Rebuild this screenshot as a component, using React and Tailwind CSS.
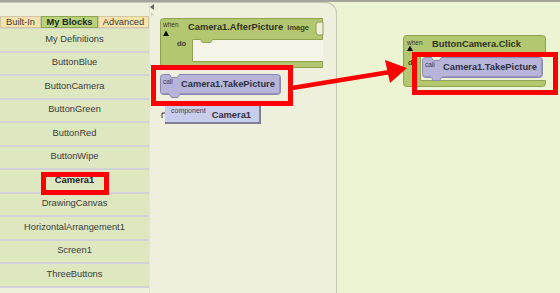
import React from "react";

const drawers = [
  "My Definitions",
  "ButtonBlue",
  "ButtonCamera",
  "ButtonGreen",
  "ButtonRed",
  "ButtonWipe",
  "Camera1",
  "DrawingCanvas",
  "HorizontalArrangement1",
  "Screen1",
  "ThreeButtons",
];

// purple "call" block with top notch and bottom plug
function CallBlock({ className, label }) {
  return (
    <div className={`absolute h-[24px] w-[122px] ${className}`}>
      <svg width="123" height="25" className="absolute left-0 top-0">
        <path
          d="M3.5,0.5 H9.5 L11.5,3.5 H17.5 L19.5,0.5 H117.5 Q120.5,0.5 120.5,3.5 V17.5 Q120.5,20.5 117.5,20.5 H19.5 L17.5,23.5 H11.5 L9.5,20.5 H3.5 Q0.5,20.5 0.5,17.5 V3.5 Q0.5,0.5 3.5,0.5 Z"
          fill="#b7b4da"
          stroke="#8a87b0"
        />
        <path d="M2,19.5 H9 M20,19.5 H118 L119.5,17.5 V3" stroke="#9693bd" fill="none" />
      </svg>
      <div className="relative flex items-start pl-[3px] pt-[5px]">
        <span className="w-[18px] text-[6.5px] leading-none text-[#3b3b55]">call</span>
        <span className="text-[9.3px] font-bold leading-[11px] text-[#2f2f3f]">{label}</span>
      </div>
    </div>
  );
}

export default function App() {
  return (
    <div className="relative h-[293px] w-[560px] overflow-hidden bg-[#edf4d3] font-['Liberation_Sans',Arial,sans-serif] text-[#3a3a3a]">
      <div className="h-[2px] bg-[#a5a59b]" />
      <div className="flex h-[291px]">
        <div className="flex w-[337px] rounded-tr-[11px] border-r border-t border-[#c6c6ba] bg-[#eeefdc]">
          <aside className="flex w-[149px] flex-col">
            <div className="h-[13px]" />
            <div className="flex h-[12px] text-[9.3px] leading-[11px]">
              <div className="w-[41px] border border-[#d0c8a4] bg-[#f6e2aa] text-center">Built-In</div>
              <div className="w-[57px] border border-[#8fa455] bg-[#b9d27a] text-center font-bold text-[#222]">My Blocks</div>
              <div className="w-[51px] border border-[#d0c8a4] bg-[#f6e2aa] text-center">Advanced</div>
            </div>
            <div className="h-[1px] bg-[#d6d6c6]" />
            {drawers.map((name) => (
              <div
                key={name}
                className={`flex h-[23.5px] shrink-0 items-center justify-center border-b-2 border-[#d4d2d8] bg-[#dfe7c1] text-[9.3px] ${
                  name === "Camera1" ? "font-bold text-[#222]" : ""
                }`}
              >
                {name}
              </div>
            ))}
          </aside>
          <div className="flex-1 border-l border-[#e3e4d2]" />
        </div>
        <div className="flex-1" />
      </div>

      {/* scroll arrows */}
      <svg width="8" height="16" className="absolute left-[149px] top-[2px]">
        <polygon points="5,2 5,8 1,5" fill="#666" />
        <polygon points="2,10 2,15 5,12.5" fill="#d6d6c8" />
      </svg>

      {/* when Camera1.AfterPicture */}
      <div className="absolute left-[160px] top-[18px] h-[50px] w-[164px]">
        <svg width="164" height="51" className="absolute left-0 top-0">
          <rect x="32" y="21" width="131" height="23" fill="#f4f5e8" />
          <path
            d="M3.5,0.5 H162.5 V21.5 H52.5 L50.5,24.5 H42.5 L40.5,21.5 H32.5 V43.5 H162.5 V49.5 H3.5 Q0.5,49.5 0.5,46.5 V3.5 Q0.5,0.5 3.5,0.5 Z"
            fill="#b3c770"
            stroke="#8fa24f"
          />
          <path d="M163,4 H158.5 Q156,4 156,7 V14 Q156,17 158.5,17 H163 Z" fill="#eeefdc" stroke="#8fa24f" />
          <polygon points="3,18 6,12.5 9,18" fill="#111" />
        </svg>
        <div className="relative flex h-[21px] items-start pl-[3px] pt-[4px] pr-[15px]">
          <span className="w-[25px] text-[6.5px] leading-none text-[#333]">when</span>
          <span className="text-[9.3px] font-bold leading-[11px] text-[#2d3320]">Camera1.AfterPicture</span>
          <span className="ml-auto mt-[2px] text-[7.5px] font-bold leading-none text-[#3b4128]">image</span>
        </div>
        <div className="relative pl-[17px] pt-[1px] text-[7.5px] font-bold leading-none text-[#3b4128]">do</div>
      </div>

      <CallBlock className="left-[160px] top-[74px]" label="Camera1.TakePicture" />

      {/* component Camera1 */}
      <div className="absolute left-[165px] top-[104px] flex h-[20px] w-[96px] items-start justify-between border-b-2 border-r-2 border-[#7f7f99] bg-[#c8cdeb] pl-[6px] pr-[8px] pt-[3px]">
        <span className="text-[7px] leading-none text-[#3b3b55]">component</span>
        <span className="mt-[3px] text-[9.3px] font-bold leading-[11px] text-[#2f2f3f]">Camera1</span>
      </div>
      <svg width="6" height="8" className="absolute left-[160px] top-[111px]">
        <path d="M5,2 H2 V7" stroke="#333" fill="none" />
      </svg>

      {/* when ButtonCamera.Click */}
      <div className="absolute left-[403px] top-[35px] h-[52px] w-[143px]">
        <svg width="143" height="52" className="absolute left-0 top-0">
          <path
            d="M3.5,0.5 H139.5 Q142.5,0.5 142.5,3.5 V18.5 H39.5 L37.5,21.5 H31.5 L29.5,18.5 H17.5 V45.5 H142.5 V48.5 Q142.5,51.5 139.5,51.5 H3.5 Q0.5,51.5 0.5,48.5 V3.5 Q0.5,0.5 3.5,0.5 Z"
            fill="#b3c770"
            stroke="#8fa24f"
          />
          <polygon points="4,16 7,10.5 10,16" fill="#111" />
        </svg>
        <div className="relative flex items-start pl-[4px] pt-[4px]">
          <span className="mt-[1px] w-[25px] text-[6.5px] leading-none text-[#333]">when</span>
          <span className="text-[9.3px] font-bold leading-[11px] text-[#2d3320]">ButtonCamera.Click</span>
        </div>
        <div className="relative pl-[5px] pt-[9px] text-[7.5px] font-bold leading-none text-[#3b4128]">do</div>
      </div>
      <CallBlock className="left-[422px] top-[57px]" label="Camera1.TakePicture" />

      {/* annotations */}
      <div className="absolute left-[41px] top-[172px] h-[23px] w-[68px] border-[5px] border-[#ff0000]" />
      <div className="absolute left-[151px] top-[65px] h-[41px] w-[142px] border-[5px] border-[#ff0000]" />
      <div className="absolute left-[412px] top-[52px] h-[43px] w-[146px] border-[5px] border-[#ff0000]" />
      <svg width="560" height="293" className="pointer-events-none absolute left-0 top-0">
        <line x1="292" y1="88" x2="390" y2="72" stroke="#ff0000" strokeWidth="4.5" />
        <polygon points="407,68 385,60 390,83" fill="#ff0000" />
      </svg>
    </div>
  );
}
